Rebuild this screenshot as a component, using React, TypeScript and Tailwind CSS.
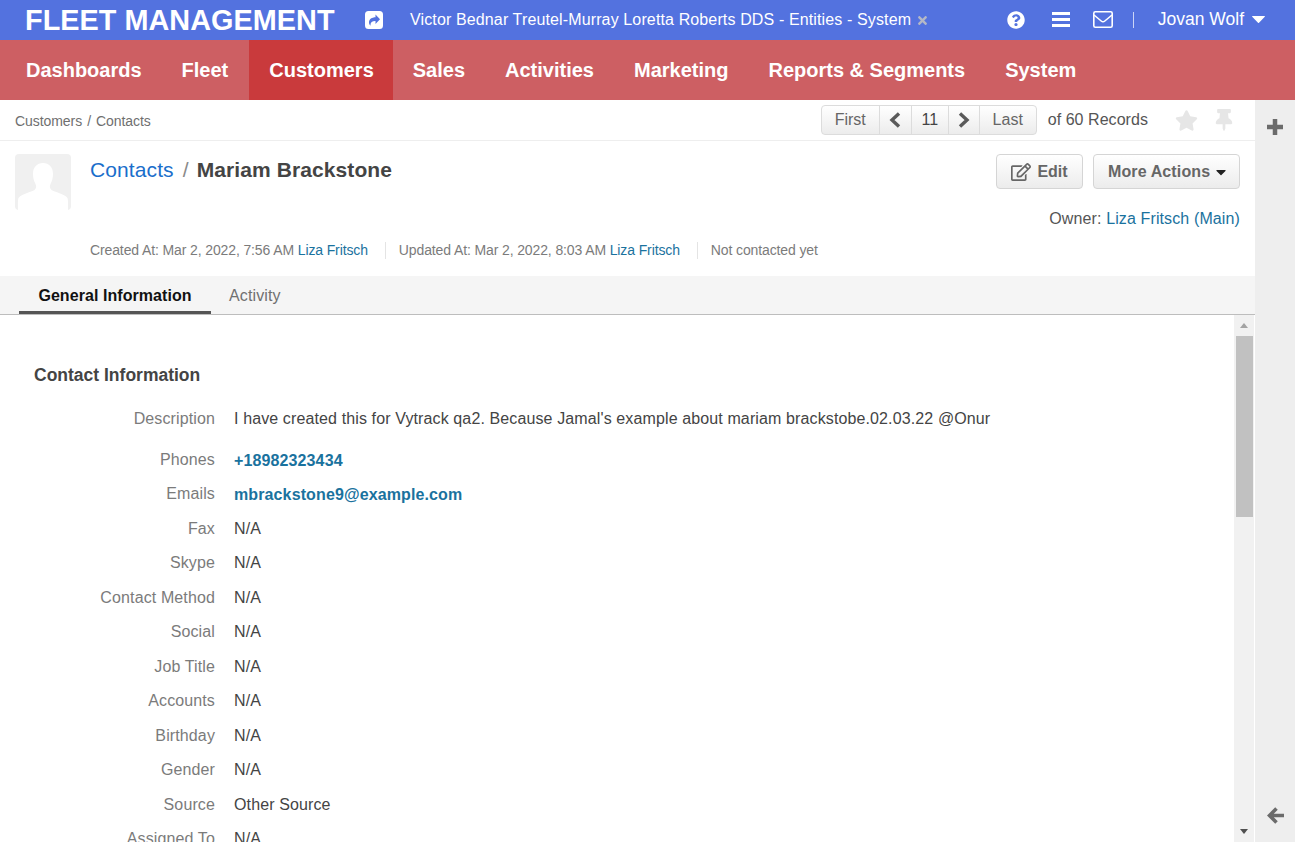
import React from "react";
import { FaCaretDown, FaQuestionCircle, FaRegEdit, FaStar, FaThumbtack, FaTimes } from "react-icons/fa";

const navItems = ["Dashboards", "Fleet", "Customers", "Sales", "Activities", "Marketing", "Reports & Segments", "System"];

const rows: { label: string; value: string; link?: boolean }[] = [
  { label: "Phones", value: "+18982323434", link: true },
  { label: "Emails", value: "mbrackstone9@example.com", link: true },
  { label: "Fax", value: "N/A" },
  { label: "Skype", value: "N/A" },
  { label: "Contact Method", value: "N/A" },
  { label: "Social", value: "N/A" },
  { label: "Job Title", value: "N/A" },
  { label: "Accounts", value: "N/A" },
  { label: "Birthday", value: "N/A" },
  { label: "Gender", value: "N/A" },
  { label: "Source", value: "Other Source" },
  { label: "Assigned To", value: "N/A" },
];

const pagerCell = "h-full flex items-center justify-center border-r border-[#dcdcdc]";

const ShareIcon = () => (
  <svg viewBox="0 0 18 18" className="h-[18px] w-[18px] shrink-0">
    <path
      fillRule="evenodd"
      fill="#ffffff"
      d="M3.500 0h11A3.500 3.500 0 0 1 18 3.500v11a3.500 3.500 0 0 1-3.500 3.500h-11A3.500 3.500 0 0 1 0 14.500v-11A3.500 3.500 0 0 1 3.500 0zM10.500 3.500v2.700C7 6.300 4 8 4 11.500c0 1.300.6 2.500 1.500 3.200-.3-3 1.500-4.700 5-4.600v2.800l4.500-4.700z"
    />
  </svg>
);

const BarsIcon = () => (
  <svg viewBox="0 0 18 15" className="h-[15px] w-[18px] shrink-0" fill="#ffffff">
    <rect y="0" width="18" height="3" />
    <rect y="6" width="18" height="3" />
    <rect y="12" width="18" height="3" />
  </svg>
);

const EnvelopeIcon = () => (
  <svg viewBox="0 0 20 17" className="h-[17px] w-5 shrink-0" fill="none" stroke="#ffffff" strokeWidth="1.600">
    <rect x="0.800" y="0.800" width="18.400" height="15.400" rx="1.500" />
    <path d="M1 4l7.200 6c1 .8 2.600.8 3.600 0L19 4" />
  </svg>
);

const Caret = ({ className }: { className: string }) => (
  <svg viewBox="0 0 13 7" className={className} fill="currentColor">
    <path d="M0.500 0h12c.4 0 .6.500.3.800L7 6.700c-.3.300-.7.300-1 0L.2.800C-.1.500.1 0 .5 0z" />
  </svg>
);

const Chevron = ({ left }: { left?: boolean }) => (
  <svg viewBox="0 0 12 16" className="h-4 w-3" fill="none" stroke="#5a5a5a" strokeWidth="3.400">
    <path d={left ? "M10 1.500L3 8l7 6.500" : "M2 1.500L9 8l-7 6.500"} />
  </svg>
);

const App: React.FC = () => {
  return (
    <div className="h-[842px] w-[1295px] overflow-hidden bg-white font-['Liberation_Sans',Arial,sans-serif] flex flex-col">
      {/* Top bar */}
      <div className="h-10 shrink-0 bg-[#5372df] flex items-center text-white">
        <div className="ml-[25px] w-[309px] text-[28.800px] tracking-[0.05px] font-bold leading-10 whitespace-nowrap">FLEET MANAGEMENT</div>
        <div className="ml-[31px] -mt-px"><ShareIcon /></div>
        <div className="ml-[27px] text-base tracking-[0.13px] whitespace-nowrap">Victor Bednar Treutel-Murray Loretta Roberts DDS - Entities - System</div>
        <FaTimes className="ml-[5px] mt-px text-[13px] text-[#b4b8c6]" />
        <div className="ml-auto flex items-center -mt-px">
          <FaQuestionCircle className="text-[18px]" />
          <div className="ml-[27px]"><BarsIcon /></div>
          <div className="ml-[23px]"><EnvelopeIcon /></div>
          <div className="ml-5 h-4 w-px bg-white/70" />
          <div className="ml-6 text-[17.500px] whitespace-nowrap">Jovan Wolf</div>
          <Caret className="ml-[8px] h-[7px] w-[13px]" />
          <div className="w-[30px]" />
        </div>
      </div>

      {/* Main nav */}
      <div className="h-[60px] shrink-0 bg-[#cd5f63] flex pl-[6px] text-white">
        {navItems.map((item) => (
          <div
            key={item}
            className={`h-full flex items-center pl-5 text-[20px] font-bold whitespace-nowrap ${
              item === "Customers" ? "ml-px pr-[19px] bg-[#c93a3c]" : "pr-5"
            }`}
          >
            {item}
          </div>
        ))}
      </div>

      <div className="flex-1 min-h-0 flex">
        <div className="w-[1255px] flex flex-col min-h-0">
          {/* Breadcrumb + pager */}
          <div className="h-[41px] shrink-0 border-b border-[#eeeeee] flex items-center pl-[15px]">
            <div className="mt-[2px] text-sm tracking-[-0.06px] text-[#6f6f6f] whitespace-nowrap">
              Customers<span className="mx-[5px]">/</span>Contacts
            </div>
            <div className="ml-auto flex items-center h-[30px]">
              <div className="h-[30px] flex items-center rounded border border-[#dcdcdc] bg-linear-to-b from-white to-[#ececec] text-base text-[#666666]">
                <div className={`${pagerCell} w-[58px]`}>First</div>
                <div className={`${pagerCell} w-[32px]`}><Chevron left /></div>
                <div className={`${pagerCell} w-[37px] text-[#444444]`}>11</div>
                <div className={`${pagerCell} w-[31px]`}><Chevron /></div>
                <div className="w-[56px] h-full flex items-center justify-center">Last</div>
              </div>
              <div className="ml-[11px] text-base tracking-[0.05px] text-[#555555] whitespace-nowrap">of 60 Records</div>
              <FaStar className="ml-[27px] text-[23px] text-[#e6e6e6]" />
              <FaThumbtack className="ml-[15px] text-[22px] text-[#e6e6e6]" />
              <div className="w-5" />
            </div>
          </div>

          {/* Page title */}
          <div className="h-[135px] shrink-0 flex pl-[15px] pr-[15px]">
            <div className="mt-[13px] h-14 w-14 rounded-sm bg-[#f0f0f0] overflow-hidden shrink-0">
              <svg viewBox="0 0 56 56" className="h-14 w-14" fill="#ffffff">
                <path d="M28 9c-6 0-10 4-10 11 0 4 1 7 2.500 10 1 2.500 1 4-1 6-3 2-13 4-16 8-.8 2-.5 8-.5 12h50c0-4 .3-10-.5-12-3-4-13-6-16-8-2-2-2-3.500-1-6C37 27 38 24 38 20c0-7-4-11-10-11z" />
              </svg>
            </div>
            <div className="ml-[19px] flex-1 min-w-0 flex flex-col">
              <div className="mt-[16px] flex justify-between h-[35px]">
                <div className="text-[21px] tracking-[0.1px] leading-[26px] whitespace-nowrap h-[26px] flex">
                  <span className="text-[#1a6ecb]">Contacts</span>
                  <span className="ml-[9px] text-[#8a8a8a]">/</span>
                  <span className="ml-[8px] font-bold text-[#444444]">Mariam Brackstone</span>
                </div>
                <div className="flex -mt-[3px]">
                  <div className="h-[35px] w-[87px] rounded border border-[#d5d5d5] bg-linear-to-b from-white to-[#ececec] flex items-center justify-center text-base font-bold text-[#666666]">
                    <FaRegEdit className="text-[20px] mr-[6px]" />Edit
                  </div>
                  <div className="ml-[10px] h-[35px] w-[147px] pl-[14px] rounded border border-[#d5d5d5] bg-linear-to-b from-white to-[#ececec] flex items-center text-base tracking-[0.12px] font-bold text-[#666666]">
                    More Actions<FaCaretDown className="ml-[3px] text-[16px] text-[#222222]" />
                  </div>
                </div>
              </div>
              <div className="mt-[17px] text-right text-base tracking-[0.12px] leading-[20px] text-[#555555]">
                Owner: <span className="text-[#1a729e]">Liza Fritsch (Main)</span>
              </div>
              <div className="mt-[11px] flex items-center text-sm tracking-[-0.12px] leading-[20px] text-[#7b7b7b] whitespace-nowrap">
                <span>Created At: Mar 2, 2022, 7:56 AM <span className="text-[#1a729e]">Liza Fritsch</span></span>
                <div className="mx-[17px] h-[17px] w-px bg-[#e4e4e4]" />
                <span className="-ml-[4px]">Updated At: Mar 2, 2022, 8:03 AM <span className="text-[#1a729e]">Liza Fritsch</span></span>
                <div className="mx-[17px] h-[17px] w-px bg-[#e4e4e4]" />
                <span className="-ml-[4px]">Not contacted yet</span>
              </div>
            </div>
          </div>

          {/* Tabs */}
          <div className="h-[39px] shrink-0 bg-[#f5f5f5] border-b border-[#bdbdbd] flex pl-[19px]">
            <div className="w-[192px] h-[38px] pt-[5px] border-b-[3px] border-[#555555] flex items-center justify-center text-base tracking-[0.06px] font-bold text-[#111111]">
              General Information
            </div>
            <div className="ml-[18px] h-[38px] pt-[2px] flex items-center text-base tracking-[0.12px] text-[#707070]">Activity</div>
          </div>

          {/* Scrolling content */}
          <div className="flex-1 min-h-0 flex overflow-hidden">
            <div className="flex-1 min-w-0 overflow-hidden pt-[48px]">
              <div className="pl-[34px] text-[17.500px] font-bold leading-[24px] text-[#444444]">Contact Information</div>
              <div className="mt-[22px] flex h-[40.700px] text-base tracking-[0.12px] leading-[20px]">
                <div className="w-[215px] text-right text-[#7b7b7b]">Description</div>
                <div className="ml-[19px] text-[#444444] whitespace-nowrap">I have created this for Vytrack qa2. Because Jamal's example about mariam brackstobe.02.03.22 @Onur</div>
              </div>
              {rows.map((row) => (
                <div key={row.label} className="flex h-[34.500px] text-base tracking-[0.12px] leading-[20px]">
                  <div className="w-[215px] text-right text-[#7b7b7b]">{row.label}</div>
                  <div className={`ml-[19px] ${row.link ? "font-bold text-[#1a729e] mt-px" : "text-[#444444]"}`}>{row.value}</div>
                </div>
              ))}
            </div>
            {/* Scrollbar */}
            <div className="w-5 mr-px shrink-0 bg-[#f1f1f1] flex flex-col items-center">
              <div className="h-[21px] flex items-center justify-center">
                <div className="border-x-[4px] border-b-[5px] border-x-transparent border-b-[#a3a3a3]" />
              </div>
              <div className="h-[181px] w-[17px] bg-[#c1c1c1]" />
              <div className="flex-1" />
              <div className="h-[21px] flex items-center justify-center">
                <div className="border-x-[4px] border-t-[5px] border-x-transparent border-t-[#505050]" />
              </div>
            </div>
          </div>
        </div>

        {/* Right rail */}
        <div className="w-10 shrink-0 bg-[#eeeeee] flex flex-col items-center justify-between pt-[19px] pb-[18px] text-[#6b6b6b]">
          <svg viewBox="0 0 16 16" className="h-4 w-4" fill="none" stroke="currentColor" strokeWidth="4.500">
            <path d="M8 0v16M0 8h16" />
          </svg>
          <svg viewBox="0 0 17 17" className="h-[17px] w-[17px]" fill="none" stroke="currentColor" strokeWidth="3.600">
            <path d="M9.500 1.500L2.500 8.500l7 7M3 8.500h14" />
          </svg>
        </div>
      </div>
    </div>
  );
};

export default App;
